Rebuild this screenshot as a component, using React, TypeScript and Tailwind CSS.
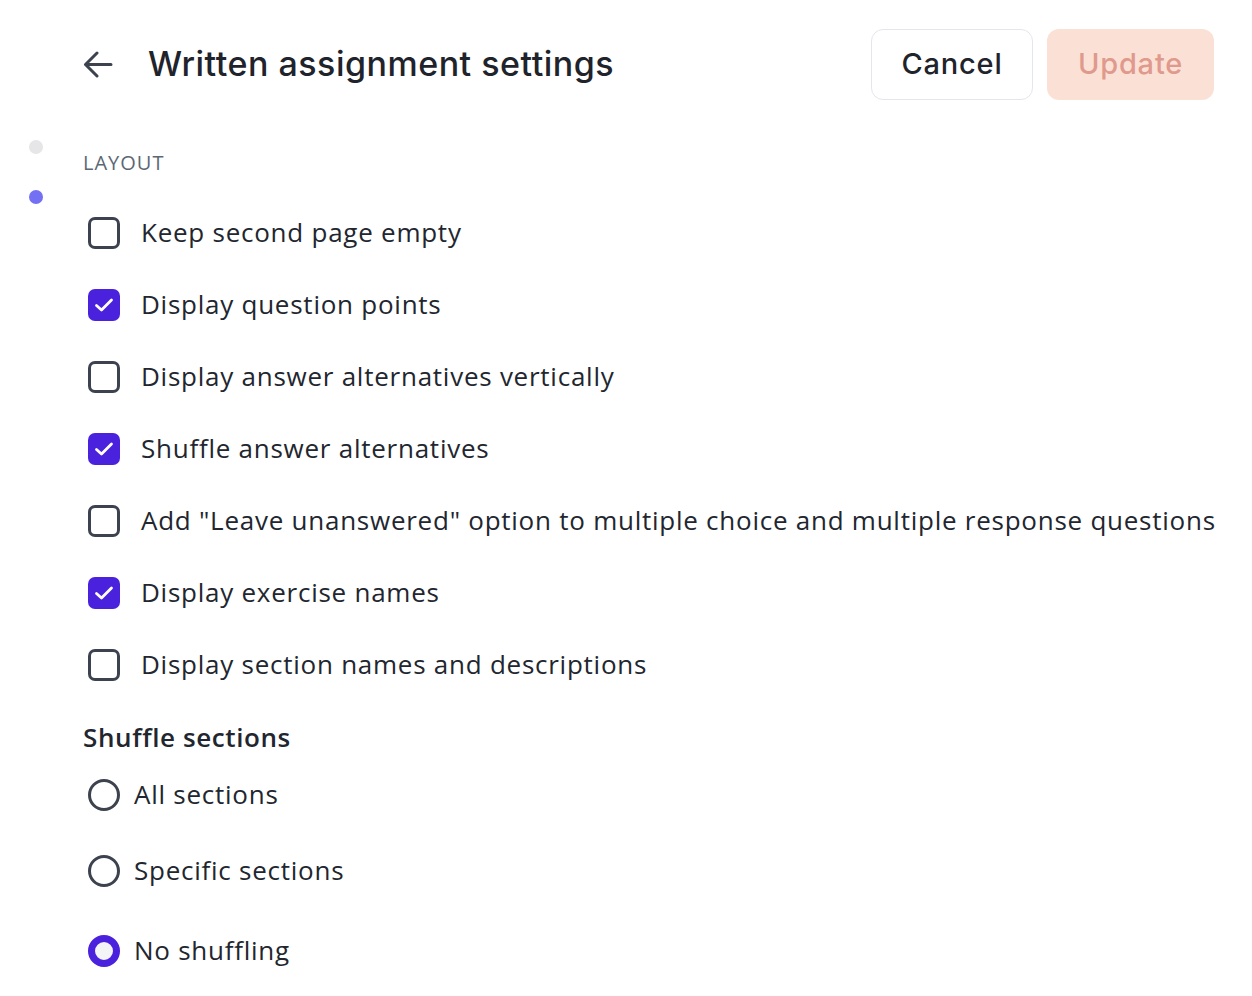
import { useState } from 'react';

const options = [
  { id: 'keepEmpty', label: 'Keep second page empty', checked: false },
  { id: 'points', label: 'Display question points', checked: true },
  { id: 'vertical', label: 'Display answer alternatives vertically', checked: false },
  { id: 'shuffleAlt', label: 'Shuffle answer alternatives', checked: true },
  {
    id: 'unanswered',
    label: 'Add "Leave unanswered" option to multiple choice and multiple response questions',
    checked: false,
  },
  { id: 'exerciseNames', label: 'Display exercise names', checked: true },
  { id: 'sectionNames', label: 'Display section names and descriptions', checked: false },
];

const shuffleModes = [
  { id: 'all', label: 'All sections', row: 'mt-[12px]' },
  { id: 'specific', label: 'Specific sections', row: 'mt-[20px]' },
  { id: 'none', label: 'No shuffling', row: 'mt-[24px]' },
];

function Checkbox({ checked, onChange }: { checked: boolean; onChange: () => void }) {
  return (
    <button
      type="button"
      onClick={onChange}
      className={
        checked
          ? 'flex h-[32px] w-[32px] shrink-0 items-center justify-center rounded-[7px] bg-[#4a21dc]'
          : 'flex h-[32px] w-[32px] shrink-0 items-center justify-center rounded-[7px] border-[3px] border-[#3c434e] bg-white'
      }
    >
      {checked && (
        <svg width="20" height="16" viewBox="0 0 20 16" fill="none">
          <path d="M2.5 8.5l5 4.5L17.5 3" stroke="white" strokeWidth="2.8" strokeLinecap="round" strokeLinejoin="round" />
        </svg>
      )}
    </button>
  );
}

function Radio({ selected }: { selected: boolean }) {
  return (
    <span
      className={
        selected
          ? 'block h-[32px] w-[32px] shrink-0 rounded-full border-[7px] border-[#4a21dc] bg-[#f3f4f6]'
          : 'block h-[32px] w-[32px] shrink-0 rounded-full border-[3px] border-[#3c434e] bg-white'
      }
    />
  );
}

export default function App() {
  const [values, setValues] = useState<Record<string, boolean>>(
    Object.fromEntries(options.map((o) => [o.id, o.checked]))
  );
  const [mode, setMode] = useState('none');

  return (
    <div className="min-h-[996px] w-[1252px] bg-white font-['Open_Sans',sans-serif] text-[#22262f]">
      <header className="flex h-[70px] items-center pl-[83px] pr-[38px] mt-[29px]">
        <button type="button" className="mr-[35px] text-[#3c434e]">
          <svg width="30" height="27" viewBox="0 0 30 27" fill="none">
            <path d="M28 13.5H2.5M14 2L2.5 13.5 14 25" stroke="currentColor" strokeWidth="3" strokeLinecap="round" strokeLinejoin="round" />
          </svg>
        </button>
        <h1 className="-mt-[2px] font-['Inter',sans-serif] text-[34px] font-medium tracking-[0.5px] text-[#1f232b]">
          Written assignment settings
        </h1>
        <div className="ml-auto flex gap-[14px]">
          <button
            type="button"
            className="h-[71px] w-[162px] rounded-[12px] border border-[#e4e6ea] bg-white font-['Inter',sans-serif] text-[29px] font-medium tracking-[0.8px] text-[#1f232b]"
          >
            Cancel
          </button>
          <button
            type="button"
            className="h-[71px] w-[167px] rounded-[12px] bg-[#fbe1d5] font-['Inter',sans-serif] text-[29px] font-medium tracking-[0.8px] text-[#e0998d]"
          >
            Update
          </button>
        </div>
      </header>

      <div className="mt-[29px] flex">
        <nav className="flex w-[83px] flex-col gap-[36px] pl-[29px] pt-[12px]">
          <span className="block h-[14px] w-[14px] rounded-full bg-[#e6e6e8]" />
          <span className="block h-[14px] w-[14px] rounded-full bg-[#7470f3]" />
        </nav>

        <main className="flex-1 pt-[21px]">
          <div className="text-[20px] leading-[28px] tracking-[1px] text-[#5c6775]">LAYOUT</div>

          <div className="mt-[20px] flex flex-col">
            {options.map((o) => (
              <label key={o.id} className="flex h-[72px] items-center gap-[21px] pl-[5px]">
                <Checkbox
                  checked={values[o.id]}
                  onChange={() => setValues((v) => ({ ...v, [o.id]: !v[o.id] }))}
                />
                <span className="-mt-[2px] whitespace-nowrap text-[26px] tracking-[0.75px]">{o.label}</span>
              </label>
            ))}
          </div>

          <h2 className="mt-[18px] text-[26px] font-semibold leading-[36px] tracking-[0.6px]">Shuffle sections</h2>

          <div className="flex flex-col">
            {shuffleModes.map((m) => (
              <label
                key={m.id}
                onClick={() => setMode(m.id)}
                className={`flex h-[56px] items-center gap-[14px] pl-[5px] ${m.row}`}
              >
                <Radio selected={mode === m.id} />
                <span className="-mt-[2px] text-[26px] tracking-[0.75px]">{m.label}</span>
              </label>
            ))}
          </div>
        </main>
      </div>
    </div>
  );
}
